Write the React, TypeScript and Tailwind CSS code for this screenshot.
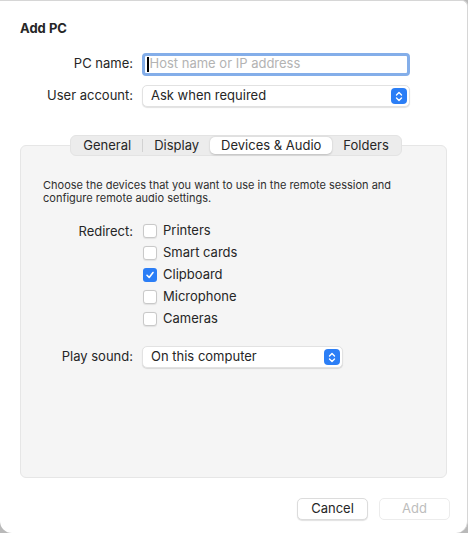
import React, { useState } from "react";

const font = { fontFamily: "Inter, 'Noto Sans', sans-serif" };

function Chevrons() {
  return (
    <span className="flex h-[16px] w-[16px] items-center justify-center rounded-[4px] bg-[#2b7ef6]">
      <svg width="8" height="11" viewBox="0 0 8 11" fill="none">
        <path d="M1.5 4 L4 1.5 L6.5 4" stroke="white" strokeWidth="1.4" strokeLinecap="round" strokeLinejoin="round" />
        <path d="M1.5 7 L4 9.5 L6.5 7" stroke="white" strokeWidth="1.4" strokeLinecap="round" strokeLinejoin="round" />
      </svg>
    </span>
  );
}

function Popup({ label, width }: { label: string; width: string }) {
  return (
    <div
      className={`flex h-[22px] ${width} items-center justify-between rounded-[5px] border border-[#e2e2e2] bg-white pl-[8px] pr-[2px] shadow-[0_1px_1px_rgba(0,0,0,0.12)]`}
    >
      <span className="text-[13px] text-[#262626]">{label}</span>
      <Chevrons />
    </div>
  );
}

function Check({ label, checked }: { label: string; checked?: boolean }) {
  return (
    <div className="flex h-[22px] items-center gap-[6px]">
      {checked ? (
        <span className="flex h-[14px] w-[14px] items-center justify-center rounded-[3px] bg-[#2b7ef6]">
          <svg width="10" height="10" viewBox="0 0 10 10" fill="none">
            <path d="M2 5.3 L4.2 7.5 L8 2.5" stroke="white" strokeWidth="1.6" strokeLinecap="round" strokeLinejoin="round" />
          </svg>
        </span>
      ) : (
        <span className="h-[14px] w-[14px] rounded-[3px] border border-[#c9c9c9] bg-white shadow-[0_0.5px_1px_rgba(0,0,0,0.08)]" />
      )}
      <span className="text-[13px] text-[#262626]">{label}</span>
    </div>
  );
}

export default function App() {
  const [tab, setTab] = useState("Devices & Audio");
  const tabs = ["General", "Display", "Devices & Audio", "Folders"];

  return (
    <div className="h-[533px] w-[468px] bg-[#b9b9b9]" style={font}>
      <div className="flex h-full flex-col rounded-b-[12px] rounded-tr-[6px] border-t border-r border-[#d6d6d6] bg-white px-[20px] text-[#262626]">
        <div className="pt-[19px] text-[13px] font-bold leading-[16px]">Add PC</div>

        <div className="mt-[17px] flex flex-col gap-[10px]">
          <div className="flex h-[22px] items-center gap-[9px]">
            <span className="w-[113px] text-right text-[13px]">PC name:</span>
            <div className="flex h-[23px] w-[268px] items-center rounded-[4px] border-[3px] border-[#84aee9] bg-white pl-[2px]">
              <span className="mr-[1px] h-[15px] w-[1.5px] bg-black" />
              <span className="text-[13px] text-[#b3b3b3]">Host name or IP address</span>
            </div>
          </div>
          <div className="flex h-[22px] items-center gap-[9px]">
            <span className="w-[113px] text-right text-[13px]">User account:</span>
            <Popup label="Ask when required" width="w-[268px]" />
          </div>
        </div>

        <div className="mt-[28px] flex justify-center pl-[5px]">
          <div className="z-10 flex h-[21px] items-center rounded-[6px] border border-[#e3e3e3] bg-[#ececec] p-[1px]">
            {tabs.map((t, i) => {
              const sel = t === tab;
              const nextSel = tabs[i + 1] === tab;
              const last = i === tabs.length - 1;
              return (
                <div key={t} className="flex h-full items-center">
                  <button
                    onClick={() => setTab(t)}
                    className={`flex h-full items-center rounded-[5px] px-[11px] text-[13px] text-[#262626] ${
                      sel ? "bg-white shadow-[0_0.5px_2px_rgba(0,0,0,0.2)]" : ""
                    }`}
                  >
                    {t}
                  </button>
                  {!last && !sel && !nextSel && <span className="h-[13px] w-px bg-[#d2d2d2]" />}
                </div>
              );
            })}
          </div>
        </div>

        <div className="-mt-[11px] flex h-[333px] flex-col rounded-[6px] border border-[#e6e6e6] bg-[#f5f5f5] px-[22px] pt-[33px]">
          <p className="text-[11px] leading-[13px] text-[#2e2e2e]">
            Choose the devices that you want to use in the remote session and
            <br />
            configure remote audio settings.
          </p>

          <div className="mt-[15px] flex gap-[10px]">
            <span className="w-[90px] pt-[2px] text-right text-[13px] leading-[18px]">Redirect:</span>
            <div className="flex flex-col">
              <Check label="Printers" />
              <Check label="Smart cards" />
              <Check label="Clipboard" checked />
              <Check label="Microphone" />
              <Check label="Cameras" />
            </div>
          </div>

          <div className="mt-[16px] flex items-center gap-[9px]">
            <span className="w-[90px] text-right text-[13px]">Play sound:</span>
            <Popup label="On this computer" width="w-[201px]" />
          </div>
        </div>

        <div className="-mr-[3px] mt-[20px] flex justify-end gap-[11px]">
          <button className="h-[22px] w-[71px] rounded-[5px] border border-[#dcdcdc] bg-white text-[13px] text-[#262626] shadow-[0_1px_1px_rgba(0,0,0,0.12)]">
            Cancel
          </button>
          <button className="h-[22px] w-[71px] rounded-[5px] border border-[#ececec] bg-white text-[13px] text-[#bdbdbd]">
            Add
          </button>
        </div>
      </div>
    </div>
  );
}
